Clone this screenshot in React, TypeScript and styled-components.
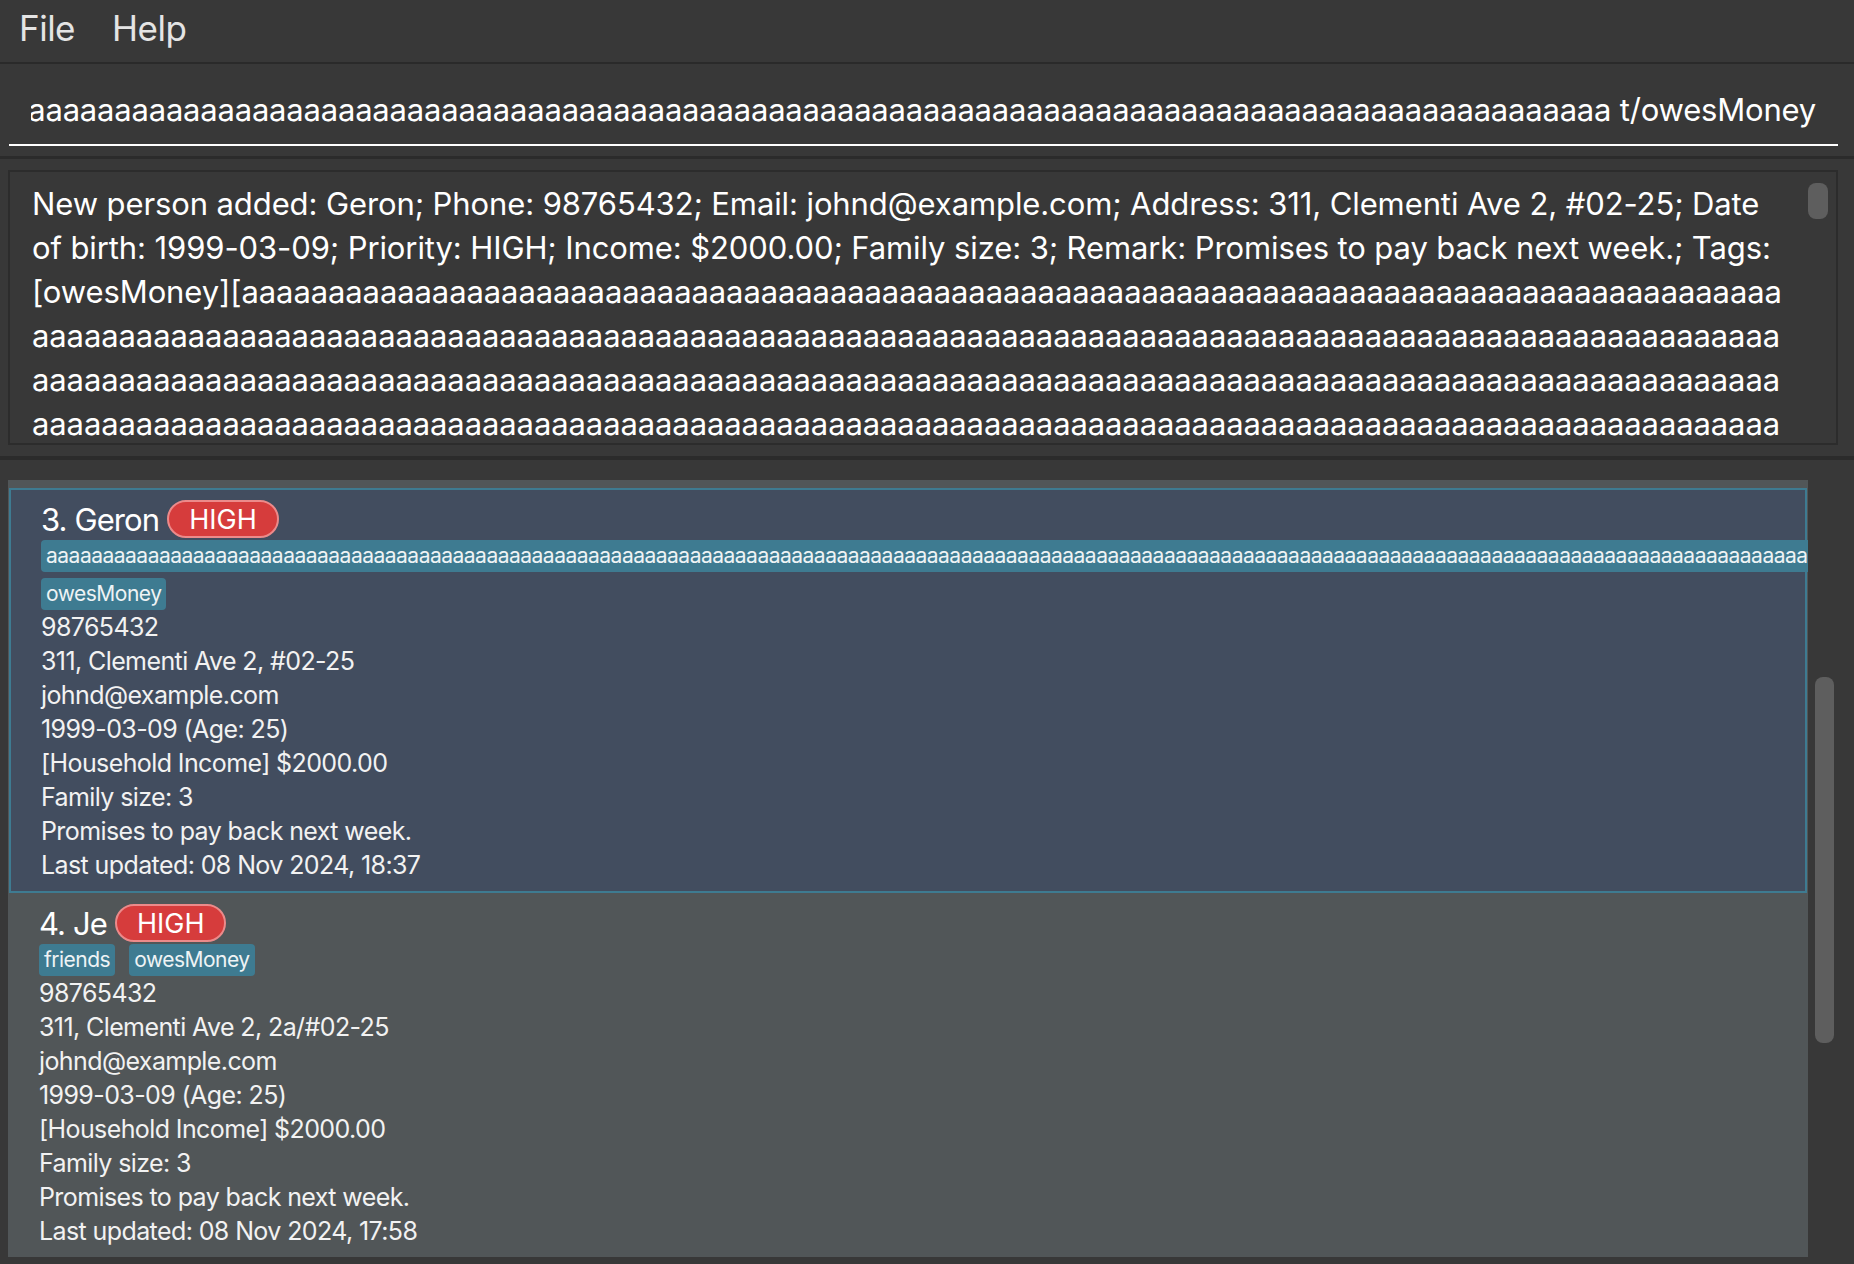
import React, { useLayoutEffect, useRef } from "react";
import styled, { createGlobalStyle } from "styled-components";

const GlobalStyle = createGlobalStyle`
  html, body { margin: 0; padding: 0; background: #383838; }
  body { font-family: Inter, "Noto Sans", sans-serif; color: #ffffff; }
  * { box-sizing: border-box; }
`;

const Window = styled.div`
  width: 1854px;
  height: 1264px;
  display: flex;
  flex-direction: column;
  background: #383838;
  overflow: hidden;
`;

const MenuBar = styled.nav`
  height: 64px;
  flex-shrink: 0;
  display: flex;
  align-items: center;
  gap: 37px;
  padding: 0 0 6px 19px;
  border-bottom: 2px solid #2a2a2a;
`;

const MenuItem = styled.span`
  font-size: 35px;
  color: #e4e4e4;
  letter-spacing: -0.5px;
`;

const CommandSection = styled.section`
  height: 95px;
  flex-shrink: 0;
  padding: 20px 16px 0 9px;
  border-bottom: 3px solid #2b2b2b;
`;

const CommandInput = styled.input`
  display: block;
  width: 100%;
  height: 62px;
  padding: 0 22px 10px 22px;
  background: transparent;
  border: none;
  border-bottom: 2px solid #ffffff;
  color: #ffffff;
  font-family: Inter, "Noto Sans", sans-serif;
  font-size: 31px;
  letter-spacing: -0.2px;
  outline: none;
`;

const ResultSection = styled.section`
  height: 301px;
  flex-shrink: 0;
  padding: 11px 16px 11px 8px;
  border-bottom: 4px solid #2b2b2b;
`;

const ResultBox = styled.div`
  height: 275px;
  display: flex;
  border: 2px solid #2c2c2c;
  overflow: hidden;
`;

const ResultText = styled.p`
  flex: 1;
  margin: 0;
  padding: 10px 24px 0 22px;
  font-size: 31px;
  line-height: 44px;
  letter-spacing: -0.1px;
  color: #ffffff;
`;

const LongWord = styled.span`
  word-break: break-all;
`;

const ScrollColumn = styled.div<{ $top: number; $left: number; $width: number }>`
  flex-shrink: 0;
  width: ${(p) => p.$width}px;
  padding-top: ${(p) => p.$top}px;
  padding-left: ${(p) => p.$left}px;
  display: flex;
  flex-direction: column;
`;

const Thumb = styled.div<{ $w: number; $h: number }>`
  width: ${(p) => p.$w}px;
  height: ${(p) => p.$h}px;
  border-radius: 8px;
  background: #5e5e5e;
`;

const ListSection = styled.section`
  flex: 1;
  display: flex;
  padding: 20px 0 7px 8px;
`;

const ListView = styled.div`
  width: 1800px;
  background: #515658;
  padding-top: 8px;
  overflow: hidden;
`;

const Card = styled.article<{ $selected?: boolean }>`
  display: block;
  background: ${(p) => (p.$selected ? "#424d5f" : "#515658")};
  border: ${(p) => (p.$selected ? "2px solid #3e7b91" : "none")};
  margin: ${(p) => (p.$selected ? "0 1px" : "0")};
  padding: ${(p) => (p.$selected ? "10px 30px 9px 30px" : "11px 30px 9px 31px")};
`;

const NameRow = styled.div`
  display: flex;
  align-items: center;
  gap: 8px;
  height: 38px;
`;

const Name = styled.span`
  font-size: 31px;
  color: #ffffff;
  letter-spacing: -0.9px;
`;

const PriorityBadge = styled.span`
  display: flex;
  align-items: center;
  height: 38px;
  padding: 0 20px;
  border-radius: 19px;
  background: #d63c3c;
  border: 2px solid #ec8a8a;
  font-size: 27px;
  color: #ffffff;
`;

const TagRow = styled.div`
  display: flex;
  flex-wrap: wrap;
  gap: 6px 14px;
  margin-top: 2px;
`;

const Tag = styled.span`
  flex-shrink: 0;
  height: 32px;
  line-height: 32px;
  padding: 0 5px;
  border-radius: 4px;
  background: #3e7b91;
  color: #eef3f5;
  font-size: 21px;
  letter-spacing: -0.5px;
  white-space: nowrap;
`;

const Detail = styled.div`
  height: 34px;
  line-height: 34px;
  font-size: 25px;
  color: #f2f2f2;
  letter-spacing: -0.6px;
  white-space: nowrap;
`;

const LONG_TAG = "a".repeat(500);

type Person = {
  index: number;
  name: string;
  priority: string;
  tags: string[];
  phone: string;
  address: string;
  email: string;
  dob: string;
  income: string;
  family: string;
  remark: string;
  updated: string;
};

const people: Person[] = [
  {
    index: 3,
    name: "Geron",
    priority: "HIGH",
    tags: [LONG_TAG, "owesMoney"],
    phone: "98765432",
    address: "311, Clementi Ave 2, #02-25",
    email: "johnd@example.com",
    dob: "1999-03-09 (Age: 25)",
    income: "[Household Income] $2000.00",
    family: "Family size: 3",
    remark: "Promises to pay back next week.",
    updated: "Last updated: 08 Nov 2024, 18:37",
  },
  {
    index: 4,
    name: "Je",
    priority: "HIGH",
    tags: ["friends", "owesMoney"],
    phone: "98765432",
    address: "311, Clementi Ave 2, 2a/#02-25",
    email: "johnd@example.com",
    dob: "1999-03-09 (Age: 25)",
    income: "[Household Income] $2000.00",
    family: "Family size: 3",
    remark: "Promises to pay back next week.",
    updated: "Last updated: 08 Nov 2024, 17:58",
  },
];

const COMMAND =
  "add n/Geron p/98765432 e/johnd@example.com a/311, Clementi Ave 2, #02-25 d/1999-03-09 pri/HIGH inc/2000 f/3 r/Promises to pay back next week. t/" +
  LONG_TAG +
  " t/owesMoney";

function PersonCard({ person, selected }: { person: Person; selected?: boolean }) {
  return (
    <Card $selected={selected}>
      <NameRow>
        <Name>
          {person.index}. {person.name}
        </Name>
        <PriorityBadge>{person.priority}</PriorityBadge>
      </NameRow>
      <TagRow>
        {person.tags.map((t) => (
          <Tag key={t}>{t}</Tag>
        ))}
      </TagRow>
      <Detail>{person.phone}</Detail>
      <Detail>{person.address}</Detail>
      <Detail>{person.email}</Detail>
      <Detail>{person.dob}</Detail>
      <Detail>{person.income}</Detail>
      <Detail>{person.family}</Detail>
      <Detail>{person.remark}</Detail>
      <Detail>{person.updated}</Detail>
    </Card>
  );
}

export default function App() {
  const inputRef = useRef<HTMLInputElement>(null);
  useLayoutEffect(() => {
    const el = inputRef.current;
    if (el) el.scrollLeft = el.scrollWidth;
  }, []);

  return (
    <Window>
      <GlobalStyle />
      <MenuBar>
        <MenuItem>File</MenuItem>
        <MenuItem>Help</MenuItem>
      </MenuBar>
      <CommandSection>
        <CommandInput ref={inputRef} defaultValue={COMMAND} readOnly />
      </CommandSection>
      <ResultSection>
        <ResultBox>
          <ResultText>
            New person added: Geron; Phone: 98765432; Email: johnd@example.com; Address: 311,
            Clementi Ave 2, #02-25; Date of birth: 1999-03-09; Priority: HIGH; Income: $2000.00;
            Family size: 3; Remark: Promises to pay back next week.; Tags: [owesMoney]
            <LongWord>[{LONG_TAG}]</LongWord>
          </ResultText>
          <ScrollColumn $top={11} $left={0} $width={28}>
            <Thumb $w={20} $h={36} />
          </ScrollColumn>
        </ResultBox>
      </ResultSection>
      <ListSection>
        <ListView>
          {people.map((p) => (
            <PersonCard key={p.index} person={p} selected={p.index === 3} />
          ))}
        </ListView>
        <ScrollColumn $top={197} $left={7} $width={46}>
          <Thumb $w={19} $h={366} />
        </ScrollColumn>
      </ListSection>
    </Window>
  );
}
